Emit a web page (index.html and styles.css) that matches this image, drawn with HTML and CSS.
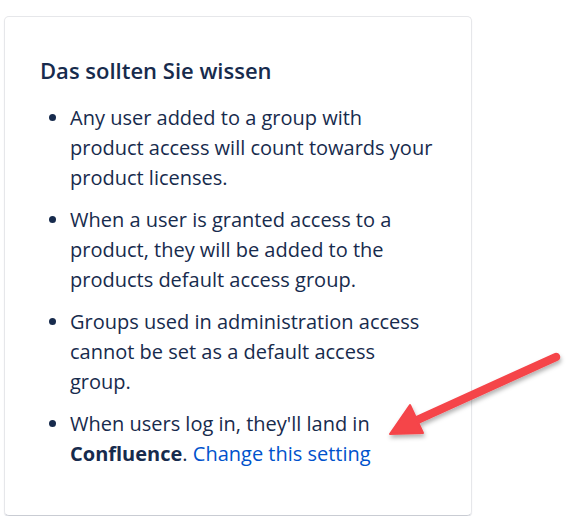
FILE: index.html
```html
<!DOCTYPE html>
<html lang="de">
<head>
  <meta charset="UTF-8">
  <meta name="viewport" content="width=device-width, initial-scale=1.0">
  <title>Das sollten Sie wissen</title>
  <link rel="stylesheet" href="styles.css">
</head>
<body>
  <div class="card">
    <h2 class="card-title">Das sollten Sie wissen</h2>
    <ul class="notes">
      <li>Any user added to a group with product access will count towards your product licenses.</li>
      <li>When a user is granted access to a product, they will be added to the products default access group.</li>
      <li>Groups used in administration access cannot be set as a default access group.</li>
      <li>When users log in, they'll land in <strong>Confluence</strong>. <a href="#">Change this setting</a></li>
    </ul>
  </div>
  <!-- annotation arrow -->
  <svg class="arrow" width="566" height="521" viewBox="0 0 566 521">
    <defs>
      <filter id="shadow" x="-20%" y="-20%" width="140%" height="140%">
        <feDropShadow dx="1" dy="3" stdDeviation="2" flood-color="#000" flood-opacity="0.3"/>
      </filter>
    </defs>
    <g filter="url(#shadow)" fill="#f5444a" stroke="#f5444a">
      <line x1="556" y1="357" x2="415" y2="421" stroke-width="8.5" stroke-linecap="round"/>
      <polygon points="390,434 410,405 423,433" stroke-width="2" stroke-linejoin="round"/>
    </g>
  </svg>
</body>
</html>
```

FILE: styles.css
```css
html, body { margin: 0; background: #fff; }
body { font-family: 'Open Sans', 'Noto Sans', sans-serif; color: #172b4d; position: relative; }

.card {
  margin: 16px 0 0 4px; width: 468px; height: 500px; box-sizing: border-box;
  border: 1px solid #e6e7ea; border-bottom-color: #c9ccd3; border-radius: 5px;
  box-shadow: 0 1px 1px rgba(9,30,66,0.15);
  padding: 38px 36px 0 35px;
}
.card-title { margin: 0 0 18px; font-size: 22px; font-weight: 600; line-height: 30px; }

.notes { margin: 0; padding-left: 30px; font-size: 20px; line-height: 30px; }
.notes li { margin-bottom: 12px; }
.notes strong { font-weight: 700; }
.notes a { color: #0052cc; text-decoration: none; }

.arrow { position: absolute; top: 0; left: 0; pointer-events: none; }
```
